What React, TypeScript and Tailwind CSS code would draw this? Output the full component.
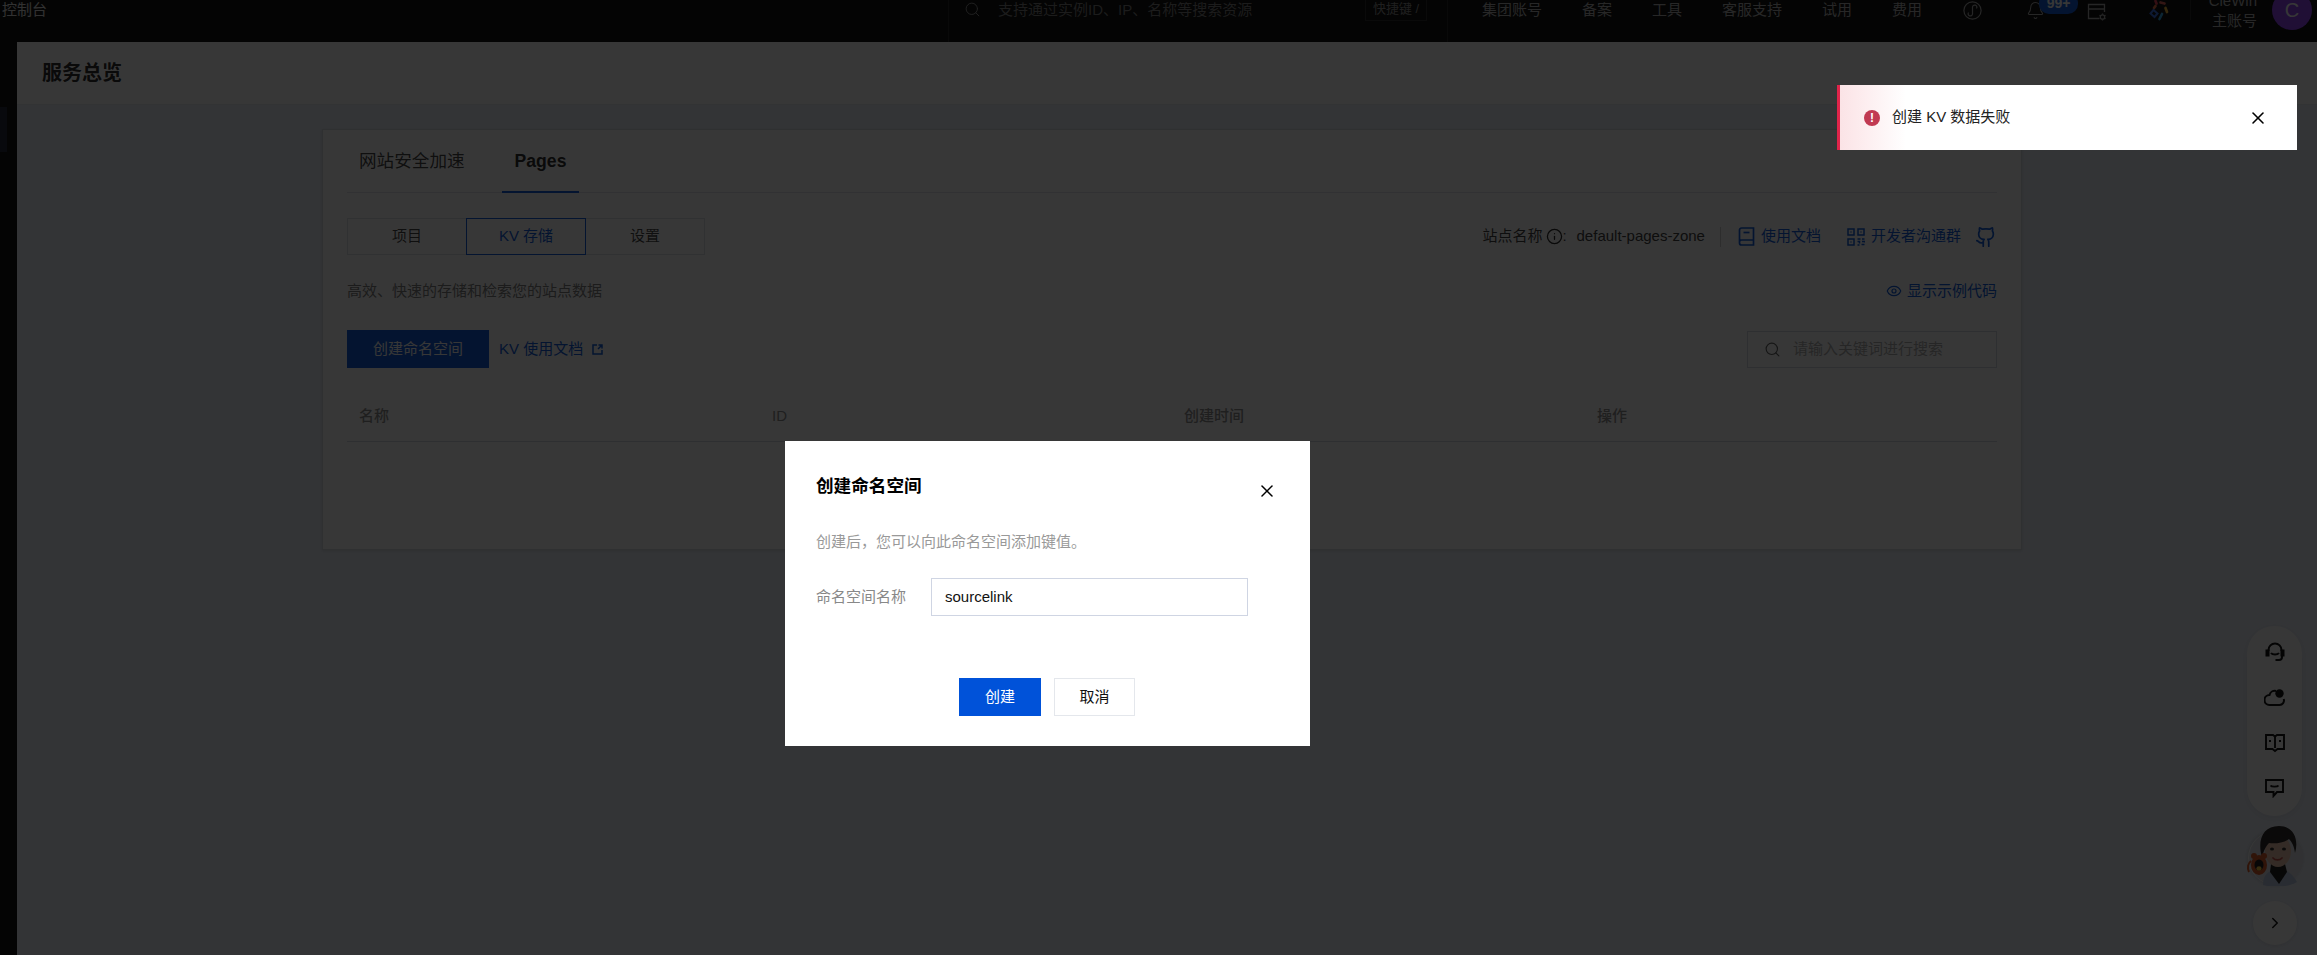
import { Search, X, Bell, Eye, ChevronRight, Info } from "lucide-react";

const FONT = "font-['Liberation_Sans','Noto_Sans_CJK_SC',sans-serif]";

function NavText({ label, className }: { label: string; className: string }) {
  return <span className={`h-[20px] leading-[20px] text-[15px] text-[#b0b0b0] shrink-0 ${className}`}>{label}</span>;
}

function BookIcon() {
  return (
    <svg width="17" height="19" viewBox="0 0 17 19" fill="none" stroke="#0052d9" strokeWidth="1.7" className="shrink-0">
      <path d="M1.5 15V3a2 2 0 0 1 2-2h12v17h-12a2 2 0 0 1-2-2v-1a2 2 0 0 1 2-2h12" />
      <path d="M5.5 5.5h6" />
    </svg>
  );
}

function QrIcon() {
  return (
    <svg width="18" height="18" viewBox="0 0 18 18" fill="none" stroke="#0052d9" strokeWidth="1.5" className="shrink-0">
      <rect x="1" y="1" width="6" height="6" />
      <rect x="11" y="1" width="6" height="6" />
      <rect x="1" y="11" width="6" height="6" />
      <path d="M3.5 4h1M13.5 4h1M3.5 14h1M10.5 11h3M15 11h2.5M10.5 13.5h2v2M15 13.5h2.5v1M10.5 17h2M14.5 16.5h3" />
    </svg>
  );
}

function GithubIcon() {
  return (
    <svg width="22" height="22" viewBox="0 0 24 24" fill="none" stroke="#0052d9" strokeWidth="1.9" strokeLinecap="round" strokeLinejoin="round">
      <path d="M15 22v-4a4.8 4.8 0 0 0-1-3.5c3 0 6-2 6-5.5.08-1.25-.27-2.48-1-3.5.28-1.15.28-2.35 0-3.5 0 0-1 0-3 1.5-2.64-.5-5.36-.5-8 0C6 2 5 2 5 2c-.3 1.15-.3 2.35 0 3.5A5.4 5.4 0 0 0 4 9c0 3.5 3 5.5 6 5.5-.39.49-.68 1.05-.85 1.65-.17.6-.22 1.23-.15 1.85v4" />
      <path d="M9 18c-4.51 2-5-2-7-2" />
    </svg>
  );
}

function MiniProgramIcon() {
  return (
    <svg width="19" height="19" viewBox="0 0 19 19" fill="none" stroke="#a8a8a8" strokeWidth="1.2" className="shrink-0">
      <circle cx="9.5" cy="9.5" r="8.6" />
      <path d="M5.5 11.5a2.2 2.2 0 1 0 4 1.2V6.3a2.2 2.2 0 1 1 4 1.2" />
    </svg>
  );
}

function PanelGearIcon() {
  return (
    <svg width="20" height="20" viewBox="0 0 20 20" fill="none" stroke="#a8a8a8" strokeWidth="1.3" className="shrink-0">
      <path d="M12 16.5H1.5v-14h16V10M1.5 7h16" />
      <circle cx="15.5" cy="15" r="2.2" />
      <path d="M15.5 11.5v1M15.5 17.5v1M12.5 13.3l.9.5M17.6 16.2l.9.5M12.5 16.7l.9-.5M17.6 13.8l.9-.5" />
    </svg>
  );
}

function ColorMarkIcon() {
  return (
    <svg width="20" height="22" viewBox="0 0 20 22" fill="none" strokeWidth="2.7" strokeLinecap="round" className="shrink-0">
      <path d="M6.5 1l1 2.5" stroke="#e8374f" />
      <path d="M11.5 2.5l4 1" stroke="#e85a4f" />
      <path d="M16.5 8l1.5 4" stroke="#f5b32d" />
      <path d="M13 14l-2.5 5" stroke="#29a5e8" />
      <path d="M6.5 6l-1.5 2" stroke="#f06a3b" />
      <path d="M4.5 10l-3 3.5 4 3.5 3-3.5-4-3.5z" stroke="#2d6be8" strokeWidth="2" />
    </svg>
  );
}

function HeadsetIcon() {
  return (
    <svg width="20" height="21" viewBox="0 0 20 21" fill="none" stroke="#000" strokeWidth="2">
      <path d="M3.5 9V8a6.5 6.5 0 0 1 13 0v1" />
      <path d="M1.5 8.5h2v5h-2zM16.5 8.5h2v5h-2z" fill="#000" />
      <path d="M6 11c1.5 2 6.5 2 8 0M17 13.5v1.5a3 3 0 0 1-3 3h-3.5" />
    </svg>
  );
}

function CloudIcon() {
  return (
    <svg width="21" height="19" viewBox="0 0 21 19" fill="none" stroke="#000" strokeWidth="2">
      <path d="M12 3a5.5 5.5 0 0 0-6.5 4A5 5 0 0 0 5.5 17h10a4.5 4.5 0 0 0 4.2-6" />
      <circle cx="15.5" cy="5.5" r="4.2" fill="#000" stroke="none" />
    </svg>
  );
}

function OpenBookIcon() {
  return (
    <svg width="20" height="20" viewBox="0 0 20 20" fill="none" stroke="#000" strokeWidth="1.9">
      <path d="M1 2h7l2 1.5L12 2h7v14h-6.5L10 18l-2.5-2H1z" />
      <path d="M10 3.5V15" />
      <path d="M4 8h2M14 8h2" />
    </svg>
  );
}

function MessageIcon() {
  return (
    <svg width="19" height="20" viewBox="0 0 19 20" fill="none" stroke="#000" strokeWidth="1.9">
      <path d="M1 2h17v12h-6l-3.5 4v-4H1z" />
      <path d="M5.5 7.5c1 1.5 7 1.5 8 0" />
    </svg>
  );
}

function Portrait() {
  return (
    <svg width="66" height="66" viewBox="0 0 66 66" className="absolute left-[-5px] top-[-11px]">
      <circle cx="33" cy="38" r="27" fill="#dfe2e8" />
      <path d="M20 65c0-8 3-12 9-15h13c6 3 9 7 12 12-5 3-14 5-21 5-5 0-9-1-13-2z" fill="#b9c9e6" />
      <path d="M28 44h14l2 8-8 12-9-12z" fill="#111" />
      <ellipse cx="35" cy="31" rx="13" ry="16" fill="#eec3a9" />
      <path d="M19 37C14 20 20 6 36 6c15 0 20 14 16 27-1-7-3-11-6-14-6 4-14 5-20 4-3 3-5 7-7 14z" fill="#1f1a1a" />
      <ellipse cx="29" cy="29" rx="2" ry="1.6" fill="#222" />
      <ellipse cx="41" cy="29" rx="2" ry="1.6" fill="#222" />
      <path d="M30 38c2 2.5 7 2.5 9 0" stroke="#c2453e" strokeWidth="1.7" fill="none" strokeLinecap="round" />
      <ellipse cx="16" cy="45" rx="8" ry="10" fill="#d9501a" />
      <circle cx="11" cy="36" r="3" fill="#d9501a" />
      <circle cx="21" cy="36" r="3" fill="#d9501a" />
      <ellipse cx="16" cy="45" rx="4.5" ry="5.5" fill="#111" />
      <ellipse cx="16" cy="48.5" rx="2.6" ry="2.2" fill="#f7c53a" />
      <path d="M8 41c-3 2-4 7-2 11" stroke="#d9501a" strokeWidth="2" fill="none" />
    </svg>
  );
}

function TopBar() {
  return (
    <header className="h-[42px] shrink-0 bg-black flex items-start overflow-hidden">
      <NavText label="控制台" className="ml-[2px] !text-[#e0e0e0]" />
      <div className="ml-[901px] w-[500px] h-[42px] shrink-0 border-x border-[#1c1c1c] flex items-start pl-[15px]">
        <Search size={17} strokeWidth={1.4} className="text-[#8a8a8a] mt-[1px] shrink-0" />
        <span className="ml-[17px] h-[20px] leading-[20px] text-[15px] text-[#777] whitespace-nowrap">支持通过实例ID、IP、名称等搜索资源</span>
        <span className="ml-auto mr-[20px] w-[62px] h-[21px] border border-[#222] border-t-0 text-[13px] leading-[17px] text-[#888] text-center shrink-0">快捷键 /</span>
      </div>
      <NavText label="集团账号" className="ml-[34px]" />
      <NavText label="备案" className="ml-[40px]" />
      <NavText label="工具" className="ml-[40px]" />
      <NavText label="客服支持" className="ml-[40px]" />
      <NavText label="试用" className="ml-[40px]" />
      <NavText label="费用" className="ml-[40px]" />
      <div className="ml-[41px] mt-[1px]"><MiniProgramIcon /></div>
      <div className="ml-[44px] relative shrink-0 mt-[1px]">
        <Bell size={19} strokeWidth={1.3} className="text-[#a8a8a8]" />
        <span className="absolute left-[13px] top-[-8px] w-[39px] h-[21px] rounded-[10px] bg-[#0052d9] text-white text-[14px] font-bold leading-[21px] text-center">99+</span>
      </div>
      <div className="ml-[42px] mt-[2px]"><PanelGearIcon /></div>
      <div className="ml-[42px]"><ColorMarkIcon /></div>
      <div className="ml-[21px] w-px h-[20px] bg-[#1c1c1c]" />
      <div className="ml-auto mr-[5px] flex items-start shrink-0">
        <div className="-mt-[9px] flex flex-col items-end text-[15px] text-[#b0b0b0]">
          <span className="leading-[20px] whitespace-nowrap">CieWin</span>
          <span className="leading-[20px]">主账号</span>
        </div>
        <div className="ml-[15px] -mt-[10px] w-[40px] h-[40px] rounded-full bg-[#8a38f5] flex items-center justify-center text-white text-[20px]">C</div>
      </div>
    </header>
  );
}

function PageBody() {
  return (
    <div className="w-[1700px] ml-[305px] mt-[24px] h-[421px] bg-white border border-[#d8dbe2] shadow-[0_1px_3px_rgba(0,0,0,0.12)] px-[24px] shrink-0">
      <div className="h-[63px] border-b border-[#dfe2e8] flex items-end">
        <span className="w-[155px] h-[63px] pt-[1px] leading-[63px] text-[17.6px] text-black/80 pl-[12px]">网站安全加速</span>
        <span className="relative w-[77px] h-[63px] pt-[1px] leading-[63px] text-[17.6px] font-bold text-black/90 text-center">
          Pages
          <span className="absolute left-0 right-0 bottom-[-1px] h-[2px] bg-[#0052d9]" />
        </span>
      </div>
      <div className="mt-[25px] flex items-center justify-between">
        <div className="flex h-[37px] text-[15px] text-black/80">
          <span className="w-[119px] border border-[#dcdfe6] border-r-0 flex items-center justify-center">项目</span>
          <span className="w-[120px] border border-[#0052d9] text-[#0052d9] flex items-center justify-center">KV 存储</span>
          <span className="w-[119px] border border-[#dcdfe6] border-l-0 flex items-center justify-center">设置</span>
        </div>
        <div className="flex items-center text-[15px] text-[#333]">
          <span>站点名称</span>
          <Info size={17} strokeWidth={1.8} className="ml-[3px] text-black/90" />
          <span className="w-[14px]">:</span>
          <span>default-pages-zone</span>
          <span className="ml-[15px] w-px h-[20px] bg-[#ccc]" />
          <span className="ml-[17px]"><BookIcon /></span>
          <span className="ml-[6px] text-[#0052d9]">使用文档</span>
          <span className="ml-[26px]"><QrIcon /></span>
          <span className="ml-[6px] text-[#0052d9]">开发者沟通群</span>
          <span className="ml-[14px]"><GithubIcon /></span>
        </div>
      </div>
      <div className="mt-[26px] h-[20px] flex items-center justify-between text-[15px]">
        <span className="text-[#777]">高效、快速的存储和检索您的站点数据</span>
        <span className="flex items-center text-[#0052d9]">
          <Eye size={16} strokeWidth={1.8} className="mr-[5px]" />
          显示示例代码
        </span>
      </div>
      <div className="mt-[29px] flex items-center justify-between">
        <div className="flex items-center">
          <button className="w-[142px] h-[38px] bg-[#0052d9] text-white text-[15px]">创建命名空间</button>
          <span className="ml-[10px] text-[15px] text-[#0052d9]">KV 使用文档</span>
          <svg width="11" height="11" viewBox="0 0 11 11" fill="none" stroke="#0052d9" strokeWidth="1.5" className="ml-[9px]">
            <path d="M5 1H1v9h9V6M6 5l4-4M6.5 1H10v3.5" />
          </svg>
        </div>
        <div className="w-[250px] h-[37px] border border-[#cfd5de] flex items-center pl-[16px]">
          <Search size={17} strokeWidth={1.6} className="text-[#555]" />
          <span className="ml-[12px] text-[15px] text-[#aaa]">请输入关键词进行搜索</span>
        </div>
      </div>
      <div className="mt-[25px] h-[49px] border-b border-[#cfd5de] grid grid-cols-[425px_412px_413px_1fr] items-center pb-[1px] text-[15px] text-[#888] font-medium">
        <span className="pl-[12px]">名称</span>
        <span>ID</span>
        <span>创建时间</span>
        <span>操作</span>
      </div>
    </div>
  );
}

function Dialog() {
  return (
    <div className="absolute left-[785px] top-[441px] w-[525px] h-[305px] bg-white px-[31px]">
      <div className="flex justify-between">
        <h2 className="mt-[33px] text-[17.6px] leading-[24px] font-bold text-black">创建命名空间</h2>
        <X size={20} strokeWidth={1.8} className="mt-[40px] mr-[2px] text-black" />
      </div>
      <p className="mt-[30px] text-[15px] leading-[22px] text-[#999]">创建后，您可以向此命名空间添加键值。</p>
      <div className="mt-[25px] flex items-center">
        <label className="w-[115px] text-[15px] text-[#888]">命名空间名称</label>
        <div className="w-[317px] h-[38px] border border-[#cfd5e3] flex items-center pl-[13px] text-[15px] text-[#111]">sourcelink</div>
      </div>
      <div className="mt-[62px] ml-[143px] flex gap-[13px]">
        <button className="w-[82px] h-[38px] bg-[#0052d9] text-white text-[15px]">创建</button>
        <button className="w-[81px] h-[38px] border border-[#e4e7ec] text-[#111] text-[15px]">取消</button>
      </div>
    </div>
  );
}

function Toast() {
  return (
    <div className="absolute left-[1837px] top-[85px] w-[460px] h-[65px] bg-white border-l-[3px] border-[#e0244a] flex items-center">
      <div className="absolute inset-y-0 left-0 w-[66px] bg-gradient-to-r from-[#fbe3e6] to-white" />
      <span className="relative ml-[24px] w-[16px] h-[16px] rounded-full bg-[#c13a52] text-white text-[12px] leading-[16px] font-bold text-center">!</span>
      <span className="relative ml-[12px] text-[15px] text-[#222]">创建 KV 数据失败</span>
      <X size={20} strokeWidth={1.9} className="relative ml-auto mr-[29px] text-black" />
    </div>
  );
}

function FloatTools() {
  return (
    <aside className="absolute left-[2247px] top-[626px] w-[55px] flex flex-col items-center">
      <div className="w-[55px] h-[190px] rounded-[28px] bg-white shadow-[0_2px_10px_rgba(0,0,0,0.08)] pt-[4px]">
        <div className="h-[45px] flex items-center justify-center"><HeadsetIcon /></div>
        <div className="h-[45px] flex items-center justify-center"><CloudIcon /></div>
        <div className="h-[45px] flex items-center justify-center"><OpenBookIcon /></div>
        <div className="h-[45px] flex items-center justify-center"><MessageIcon /></div>
      </div>
      <div className="relative mt-[15px] w-[54px] h-[54px] rounded-full bg-white shadow-[0_0_4px_rgba(0,0,0,0.2)]">
        <Portrait />
      </div>
      <div className="mt-[16px] w-[44px] h-[44px] rounded-full bg-white shadow-[0_1px_4px_rgba(0,0,0,0.1)] flex items-center justify-center">
        <ChevronRight size={18} strokeWidth={2} className="text-black" />
      </div>
    </aside>
  );
}

export default function App() {
  return (
    <div className={`relative w-full h-screen overflow-hidden bg-[#ebf0fa] flex flex-col ${FONT}`}>
      <TopBar />
      <div className="flex-1 flex min-h-0">
        <nav className="w-[17px] shrink-0 bg-black pt-[65px]">
          <div className="w-[7px] h-[45px] bg-[#141a30]" />
        </nav>
        <main className="flex-1 flex flex-col min-w-0">
          <div className="h-[63px] shrink-0 bg-white border-b border-[#e6e9ef] flex items-center pl-[25px]">
            <h1 className="text-[20px] font-bold text-black/90">服务总览</h1>
          </div>
          <PageBody />
        </main>
      </div>
      <FloatTools />
      <div className="absolute inset-0 bg-[rgba(5,5,5,0.8)]" />
      <Dialog />
      <Toast />
    </div>
  );
}
